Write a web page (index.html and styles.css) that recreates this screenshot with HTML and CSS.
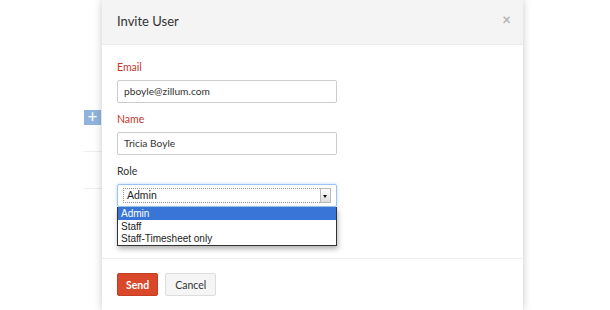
FILE: index.html
```html
<!DOCTYPE html>
<html lang="en">
<head>
  <meta charset="UTF-8">
  <title>Invite User</title>
  <link rel="stylesheet" href="styles.css">
</head>
<body>
  <div class="page">
    <div class="bg-list">
      <span class="add-btn">+</span>
      <div class="bg-row first"></div>
      <div class="bg-row"></div>
    </div>
  </div>

  <div class="modal">
    <div class="modal-header">
      <h3>Invite User</h3>
      <span class="close">&times;</span>
    </div>
    <div class="modal-body">
      <label class="req">Email</label>
      <div class="input">pboyle@zillum.com</div>
      <label class="req">Name</label>
      <div class="input">Tricia Boyle</div>
      <label>Role</label>
      <div class="select-wrap">
        <div class="select">
          <span class="select-value">Admin</span>
          <span class="select-arrow"></span>
        </div>
        <ul class="options">
          <li class="active">Admin</li>
          <li>Staff</li>
          <li>Staff-Timesheet only</li>
        </ul>
      </div>
    </div>
    <div class="modal-footer">
      <button class="btn btn-primary">Send</button>
      <button class="btn">Cancel</button>
    </div>
  </div>
</body>
</html>
```

FILE: styles.css
```css
body {
  margin: 0;
  background: #fff;
  font-family: Lato, 'Liberation Sans', sans-serif;
  color: #333;
  overflow: hidden;
}
.page {
  height: 310px;
  padding: 110px 0 0 84px;
  box-sizing: border-box;
}
.bg-list {
  width: 30px;
}
.add-btn {
  display: block;
  width: 17px;
  height: 15px;
  background: #8fb4dc;
  color: #fff;
  font-size: 17px;
  line-height: 14px;
  text-align: center;
}
.bg-row {
  height: 36px;
  border-bottom: 1px solid #eee;
}
.bg-row.first {
  height: 26px;
}
.modal {
  position: absolute;
  left: 102px;
  top: 0;
  width: 421px;
  height: 310px;
  background: #fff;
  box-shadow: 0 0 8px rgba(0,0,0,0.22);
}
.modal-header {
  background: #f4f4f4;
  height: 45px;
  border-bottom: 1px solid #ebebeb;
  box-sizing: border-box;
  padding: 0 15px;
  display: flex;
  align-items: center;
  justify-content: space-between;
}
.modal-header h3 {
  margin: 0;
  font-size: 13px;
  font-weight: normal;
  color: #333;
  padding-bottom: 2px;
}
.close {
  color: #b5b5b5;
  font-size: 15px;
  font-weight: bold;
  margin-right: -3px;
  margin-bottom: 7px;
}
.modal-body {
  padding: 16px 15px 0;
  height: 214px;
  box-sizing: border-box;
  border-bottom: 1px solid #eee;
}
.modal-body label {
  display: block;
  font-size: 10.5px;
  color: #333;
  margin-bottom: 6px;
  line-height: 13px;
}
.modal-body label.req {
  color: #c0392b;
}
.input {
  width: 220px;
  height: 23px;
  border: 1px solid #ccc;
  border-radius: 2px;
  box-sizing: border-box;
  padding: 0 6px;
  font-size: 10.2px;
  line-height: 21px;
  color: #333;
  margin-bottom: 10px;
}
.select-wrap {
  position: relative;
  width: 220px;
}
.select {
  height: 23px;
  border: 1px solid #9cc4ee;
  box-shadow: 0 0 3px #b5d5f5;
  border-radius: 2px;
  box-sizing: border-box;
  padding: 3px 5px;
  display: flex;
}
.select-value {
  flex: 1;
  border: 1px dotted #999;
  border-right: none;
  font-size: 10.5px;
  line-height: 13px;
  padding-left: 3px;
  color: #222;
}
.select-arrow {
  width: 9px;
  border: 1px solid #bbb;
  background: linear-gradient(#fff, #ddd);
  position: relative;
}
.select-arrow::after {
  content: "";
  position: absolute;
  left: 2px;
  top: 6px;
  border-left: 2.5px solid transparent;
  border-right: 2.5px solid transparent;
  border-top: 3px solid #111;
}
.options {
  position: absolute;
  left: 0;
  top: 23px;
  width: 220px;
  margin: 0;
  padding: 0;
  list-style: none;
  background: #fff;
  border: 1px solid #333;
  border-top: none;
  box-sizing: border-box;
  box-shadow: 1px 3px 5px rgba(0,0,0,0.3);
  font-family: 'Liberation Sans', sans-serif;
  font-size: 10px;
}
.options li {
  height: 12.7px;
  line-height: 13px;
  padding-left: 3px;
  color: #222;
}
.options li.active {
  background: #3875d7;
  color: #fff;
}
.modal-footer {
  padding: 14px 15px;
  display: flex;
  gap: 7px;
}
.btn {
  height: 23px;
  padding: 0 9px;
  border: 1px solid #ddd;
  border-radius: 2px;
  background: #f5f5f5;
  color: #333;
  font-family: Lato, 'Liberation Sans', sans-serif;
  font-size: 10.5px;
}
.btn-primary {
  background: #d9482b;
  border-color: #c63d22;
  color: #fff;
  font-weight: bold;
  padding: 0 8px;
}
```
